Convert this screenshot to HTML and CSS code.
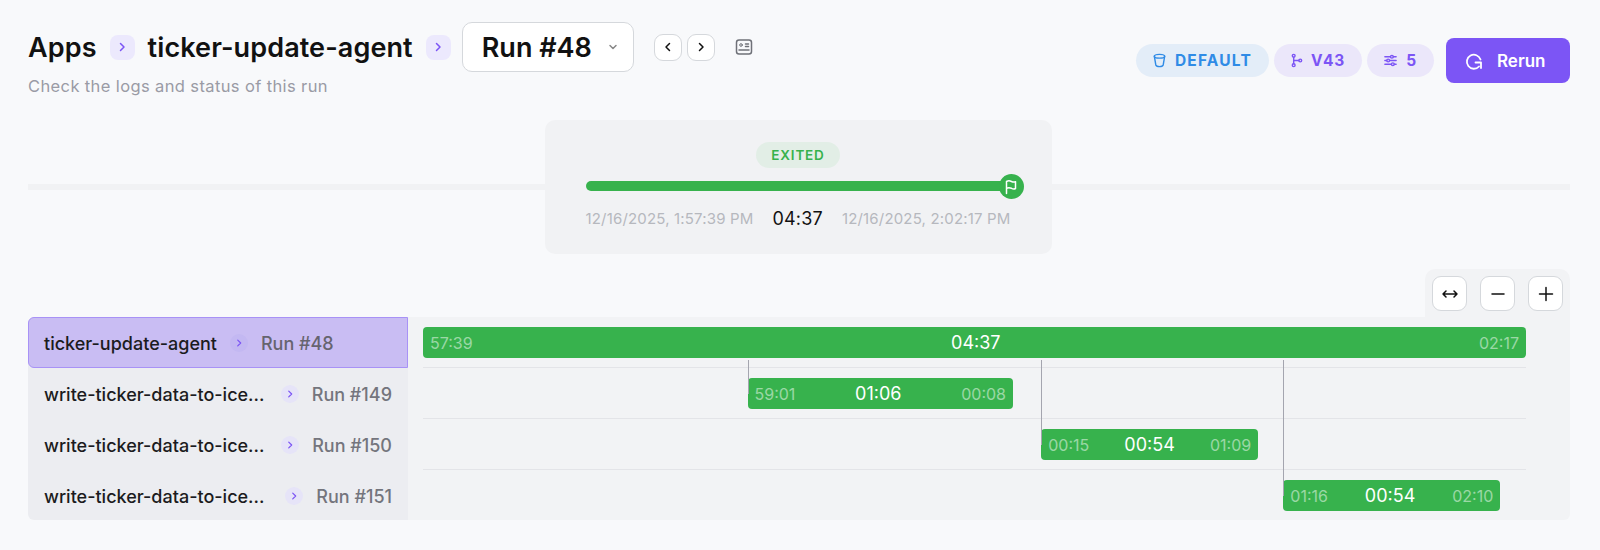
FILE: index.html
```html
<!DOCTYPE html>
<html lang="en">
<head>
  <meta charset="UTF-8" />
  <title>Run #48</title>
  <link rel="stylesheet" href="styles.css">
</head>
<body>

  <header class="top">
    <div class="top-left">
      <div class="crumbs">
        <span class="crumb">Apps</span>
        <span class="crumb-sep"><svg width="12" height="12" viewBox="0 0 12 12"><path d="M4.500 2.500 8 6l-3.500 3.500"/></svg></span>
        <span class="crumb">ticker-update-agent</span>
        <span class="crumb-sep last"><svg width="12" height="12" viewBox="0 0 12 12"><path d="M4.500 2.500 8 6l-3.500 3.500"/></svg></span>
        <div class="run-select">
          <span>Run #48</span>
          <svg width="10" height="10" viewBox="0 0 10 10"><path d="M2 3.500 5 6.500l3-3"/></svg>
        </div>
        <div class="nav-btns">
          <button class="nav-btn"><svg width="12" height="12" viewBox="0 0 12 12"><path d="M7.500 2.500 4 6l3.500 3.500"/></svg></button>
          <button class="nav-btn"><svg width="12" height="12" viewBox="0 0 12 12"><path d="M4.500 2.500 8 6l-3.500 3.500"/></svg></button>
        </div>
        <svg class="card-icon" width="18" height="18" viewBox="0 0 18 18">
          <rect x="1.500" y="2" width="15" height="14" rx="2.500"/>
          <circle cx="6" cy="7" r="1.300"/>
          <path d="M10.500 6h3M10.500 8.500h3M4 12h10"/>
        </svg>
      </div>
      <p class="subtitle">Check the logs and status of this run</p>
    </div>

    <div class="top-right">
      <span class="pill pill-blue">
        <svg width="15" height="15" viewBox="0 0 16 16"><ellipse cx="8" cy="3.500" rx="5.500" ry="2"/><path d="M2.500 3.500 4 12.500c.3 1.300 2 2 4 2s3.700-.7 4-2l1.500-9"/></svg>
        DEFAULT
      </span>
      <span class="pill pill-purple pill-tight">
        <svg width="15" height="15" viewBox="0 0 16 16"><circle cx="5" cy="3" r="1.500"/><circle cx="5" cy="13" r="1.500"/><circle cx="12" cy="8" r="1.500"/><path d="M5 4.500v7M5 8h5.500"/></svg>
        V43
      </span>
      <span class="pill pill-purple">
        <svg width="15" height="15" viewBox="0 0 16 16"><path d="M2 4h6M11 4h3M2 8h2M7 8h7M2 12h7M12 12h2"/><circle cx="9.500" cy="4" r="1.500"/><circle cx="5.500" cy="8" r="1.500"/><circle cx="10.500" cy="12" r="1.500"/></svg>
        5
      </span>
      <button class="rerun">
        <svg width="20" height="20" viewBox="0 0 20 20"><path d="M16.500 8.500A7 7 0 1 0 15 15.500"/><path d="M11.500 11.500h5.500V17"/></svg>
        Rerun
      </button>
    </div>
  </header>

  <section class="summary">
    <div class="summary-card">
      <span class="status">EXITED</span>
      <div class="progress">
        <span class="flag"><svg width="16" height="16" viewBox="0 0 16 16"><path d="M3.500 14.500V2.500c2.500-1.300 3.800-.6 5 0s2.500 1 4 .2v6.800c-1.500.8-2.800.4-4-.2s-2.500-1.300-5 0"/></svg></span>
      </div>
      <div class="times">
        <span>12/16/2025, 1:57:39 PM</span>
        <strong>04:37</strong>
        <span>12/16/2025, 2:02:17 PM</span>
      </div>
    </div>
  </section>

  <div class="zoom-bar">
    <button class="zoom-btn"><svg width="20" height="20" viewBox="0 0 20 20"><path d="M3 10h14M6 7l-3 3 3 3M14 7l3 3-3 3"/></svg></button>
    <button class="zoom-btn"><svg width="20" height="20" viewBox="0 0 20 20"><path d="M4 10h12"/></svg></button>
    <button class="zoom-btn"><svg width="20" height="20" viewBox="0 0 20 20"><path d="M3.500 10h13M10 3.500v13"/></svg></button>
  </div>

  <section class="chart">
    <div class="chart-names">
      <div class="name-row selected">
        <span class="name">ticker-update-agent</span>
        <span class="dot"><svg width="10" height="10" viewBox="0 0 12 12"><path d="M4.500 2.500 8 6l-3.500 3.500"/></svg></span>
        <span class="run">Run #48</span>
      </div>
      <div class="name-row">
        <span class="name long">write-ticker-data-to-ice...</span>
        <span class="dot"><svg width="10" height="10" viewBox="0 0 12 12"><path d="M4.500 2.500 8 6l-3.500 3.500"/></svg></span>
        <span class="run">Run #149</span>
      </div>
      <div class="name-row">
        <span class="name long">write-ticker-data-to-ice...</span>
        <span class="dot"><svg width="10" height="10" viewBox="0 0 12 12"><path d="M4.500 2.500 8 6l-3.500 3.500"/></svg></span>
        <span class="run">Run #150</span>
      </div>
      <div class="name-row">
        <span class="name long">write-ticker-data-to-ice...</span>
        <span class="dot"><svg width="10" height="10" viewBox="0 0 12 12"><path d="M4.500 2.500 8 6l-3.500 3.500"/></svg></span>
        <span class="run">Run #151</span>
      </div>
    </div>

    <div class="chart-tracks">
      <div class="track">
        <div class="bar" style="margin-left:0;width:100%">
          <span class="edge">57:39</span><span class="length">04:37</span><span class="edge">02:17</span>
        </div>
      </div>
      <div class="track">
        <div class="bar" style="margin-left:29.42%;width:24.07%">
          <span class="link" style="height:34px"></span>
          <span class="edge">59:01</span><span class="length">01:06</span><span class="edge">00:08</span>
        </div>
      </div>
      <div class="track">
        <div class="bar" style="margin-left:56.05%;width:19.67%">
          <span class="link" style="height:85px"></span>
          <span class="edge">00:15</span><span class="length">00:54</span><span class="edge">01:09</span>
        </div>
      </div>
      <div class="track">
        <div class="bar" style="margin-left:78%;width:19.67%">
          <span class="link" style="height:136px"></span>
          <span class="edge">01:16</span><span class="length">00:54</span><span class="edge">02:10</span>
        </div>
      </div>
    </div>
  </section>

</body>
</html>
```

FILE: styles.css
```css
* {
  box-sizing: border-box;
  margin: 0;
  padding: 0;
}

body {
  background: #f8f9fb;
  font-family: Inter, "Noto Sans", sans-serif;
  color: #111;
  padding: 22px 30px 0 28px;
  overflow: hidden;
}

svg {
  fill: none;
  stroke: currentColor;
  stroke-width: 1.5;
  stroke-linecap: round;
  stroke-linejoin: round;
  flex: none;
}

button {
  font-family: inherit;
  cursor: pointer;
}

/* header */
.top {
  display: flex;
  justify-content: space-between;
  align-items: flex-start;
  height: 98px;
}

.crumbs {
  display: flex;
  align-items: center;
  height: 50px;
}

.crumb {
  font-size: 27px;
  font-weight: 600;
  letter-spacing: 0.1px;
}

.crumb-sep {
  width: 25px;
  height: 25px;
  margin: 0 13px;
  border-radius: 8px;
  background: #ece9fd;
  color: #7c55f5;
  display: flex;
  align-items: center;
  justify-content: center;
}

.crumb-sep.last {
  margin-right: 11px;
}

.run-select {
  width: 172px;
  height: 50px;
  padding: 0 15px 0 19px;
  background: #fff;
  border: 1px solid #d5d8dc;
  border-radius: 10px;
  font-size: 27px;
  font-weight: 600;
  display: flex;
  align-items: center;
  justify-content: space-between;
}

.run-select svg {
  color: #888;
}

.nav-btns {
  display: flex;
  gap: 5px;
  margin-left: 20px;
}

.nav-btn {
  width: 28px;
  height: 27px;
  background: #fff;
  border: 1px solid #d5d8dc;
  border-radius: 9px;
  color: #111;
  display: flex;
  align-items: center;
  justify-content: center;
}

.card-icon {
  color: #6f7178;
  margin-left: 20px;
}

.card-icon circle {
  stroke-width: 1;
}

.subtitle {
  margin-top: 4px;
  font-size: 16.500px;
  letter-spacing: 0.38px;
  color: #9a9ba5;
}

.top-right {
  display: flex;
  align-items: center;
  gap: 5px;
  margin-top: 16px;
}

.pill {
  height: 33px;
  padding: 0 17px 0 16px;
  border-radius: 17px;
  font-size: 15.500px;
  font-weight: 700;
  letter-spacing: 0.9px;
  display: flex;
  align-items: center;
  gap: 8px;
}

.pill-blue {
  background: #e3edf8;
  color: #2f8be6;
  letter-spacing: 1.2px;
}

.pill-purple {
  background: #ebe7fa;
  color: #7c55f5;
}

.pill-tight {
  padding-left: 15px;
  gap: 7px;
}

.rerun {
  width: 124px;
  height: 45px;
  margin-left: 7px;
  padding-left: 18px;
  background: #7c55f5;
  border: none;
  border-radius: 8px;
  color: #fff;
  font-size: 17px;
  font-weight: 600;
  display: flex;
  align-items: center;
  gap: 13px;
}

.rerun svg {
  stroke-width: 1.8;
}

/* run summary */
.summary {
  position: relative;
  display: flex;
  justify-content: center;
  padding-right: 2px;
}

.summary::before {
  content: "";
  position: absolute;
  left: 0;
  right: 0;
  top: 64px;
  height: 6px;
  background: #f1f2f4;
}

.summary-card {
  position: relative;
  width: 507px;
  height: 134px;
  padding: 22px 41px 0;
  background: #f1f2f4;
  border-radius: 10px;
  display: flex;
  flex-direction: column;
  align-items: center;
}

.status {
  height: 26px;
  padding: 0 15px;
  border-radius: 13px;
  background: #e2eee6;
  color: #37b24d;
  font-size: 13.500px;
  font-weight: 600;
  letter-spacing: 0.8px;
  line-height: 26px;
}

.progress {
  position: relative;
  width: 100%;
  height: 10px;
  margin-top: 13px;
  background: #37b24d;
  border-radius: 5px;
}

.flag {
  position: absolute;
  right: -13px;
  top: -7px;
  width: 25px;
  height: 25px;
  border-radius: 50%;
  background: #37b24d;
  color: #fff;
  display: flex;
  align-items: center;
  justify-content: center;
}

.times {
  width: 100%;
  margin-top: 17px;
  display: flex;
  justify-content: space-between;
  align-items: center;
  font-size: 15px;
  letter-spacing: 0.17px;
  color: #b6b8be;
  white-space: nowrap;
}

.times strong {
  color: #111;
  font-size: 18px;
  font-weight: 400;
}

/* zoom controls */
.zoom-bar {
  width: 145px;
  height: 48px;
  margin: 15px 0 0 auto;
  padding: 7px;
  background: #f2f3f5;
  border-radius: 10px 10px 0 0;
  display: flex;
  justify-content: space-between;
}

.zoom-btn {
  width: 35px;
  height: 35px;
  background: #fff;
  border: 1px solid #d5d8dc;
  border-radius: 9px;
  color: #111;
  display: flex;
  align-items: center;
  justify-content: center;
}

/* chart */
.chart {
  display: flex;
  height: 203px;
}

.chart-names {
  width: 380px;
  flex: none;
  background: #ecedf1;
  border-radius: 6px 0 0 6px;
}

.name-row {
  height: 51px;
  padding: 1px 16px 0;
  display: flex;
  align-items: center;
  gap: 13px;
  font-size: 18px;
  font-weight: 500;
  white-space: nowrap;
}

.name-row.selected {
  background: #c9bdf3;
  border: 1px solid #a892f6;
  border-radius: 6px 0 0 6px;
  padding: 1px 15px 0;
}

.name {
  color: #1b1b20;
}

.name.long {
  flex: 1;
}

.dot {
  width: 18px;
  height: 18px;
  flex: none;
  border-radius: 50%;
  background: #e6e4f8;
  color: #7c55f5;
  display: flex;
  align-items: center;
  justify-content: center;
}

.run {
  flex: none;
  color: #74757d;
}

.selected .run {
  color: #66646f;
}

.selected .dot {
  background: #c3b8f2;
}

.chart-tracks {
  flex: 1;
  padding: 0 44px 0 15px;
  background: #f2f3f5;
  border-radius: 0 0 6px 0;
}

.track {
  height: 51px;
  padding-top: 10px;
  border-bottom: 1px solid #e3e4e8;
}

.track:last-child {
  border-bottom: none;
}

.bar {
  position: relative;
  height: 31px;
  padding: 0 7px;
  background: #37b24d;
  border-radius: 4px;
  display: flex;
  justify-content: space-between;
  align-items: center;
}

.edge {
  font-size: 16px;
  color: rgba(255, 255, 255, 0.5);
}

.length {
  font-size: 18px;
  font-weight: 400;
  color: #fff;
}

.link {
  position: absolute;
  left: 0;
  bottom: 15px;
  width: 1px;
  background: #a4a5af;
}
```
